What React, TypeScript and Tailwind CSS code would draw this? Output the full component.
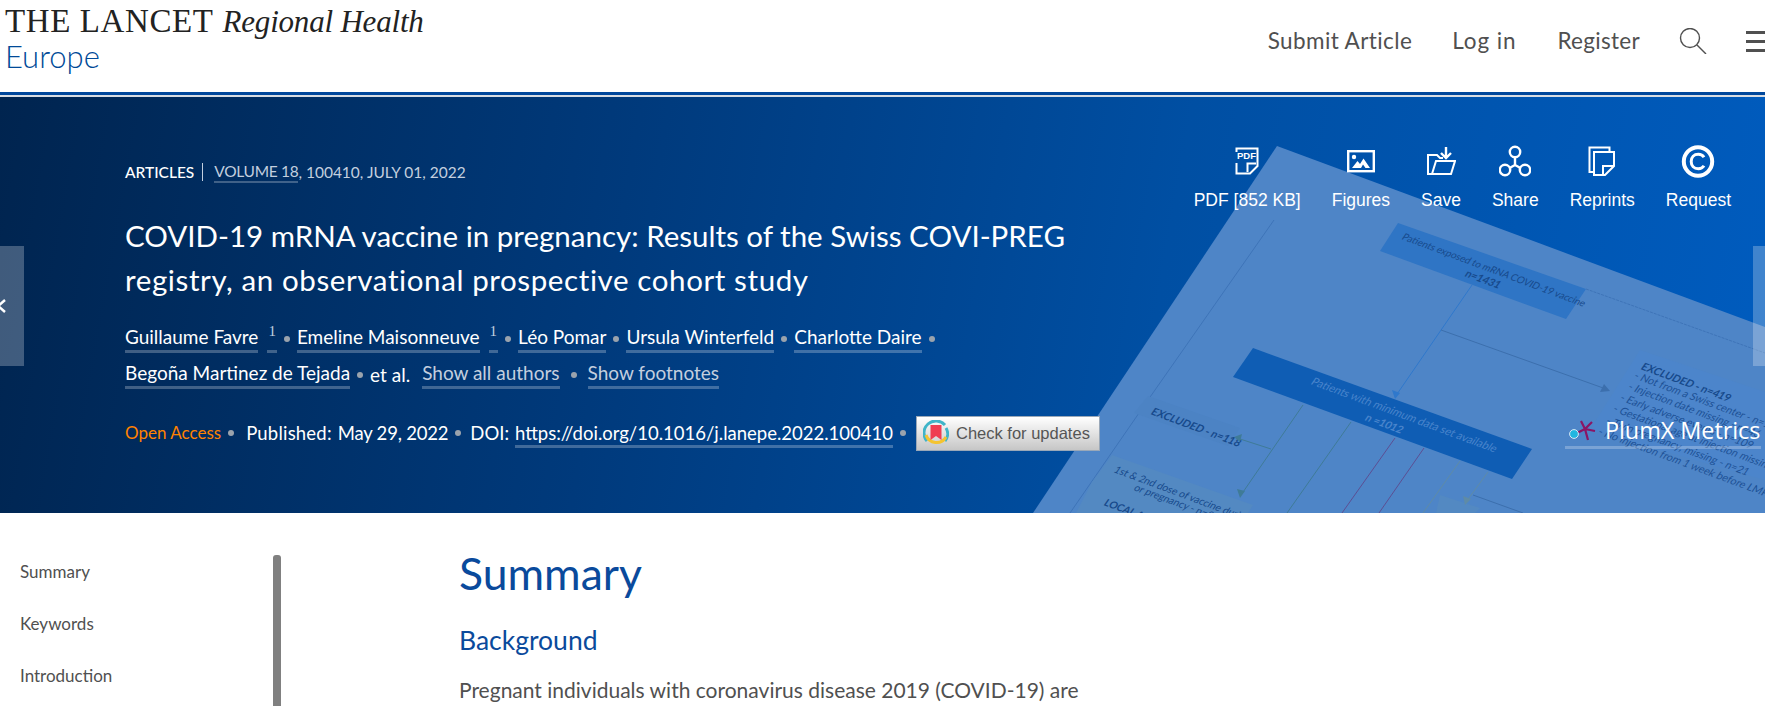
const sans = "font-['Lato','Noto_Sans',sans-serif]";

const topActions = [
  { label: "PDF [852 KB]", icon: <PdfIcon /> },
  { label: "Figures", icon: <FigureIcon /> },
  { label: "Save", icon: <SaveIcon /> },
  { label: "Share", icon: <ShareIcon /> },
  { label: "Reprints", icon: <ReprintIcon /> },
  { label: "Request", icon: <RequestIcon /> },
];

function PdfIcon() {
  return (
    <svg width="24" height="28" viewBox="0 0 24 28" fill="none" stroke="white" strokeWidth="2">
      <path d="M1.5 5V1.5H22.5V19L15 26.5H1.5V16" />
      <path d="M12.5 25V16.5H21" />
      <text x="11.5" y="12" textAnchor="middle" fontSize="9.5" fontWeight="700" fill="white" stroke="none" fontFamily="Liberation Sans">PDF</text>
    </svg>
  );
}

function FigureIcon() {
  return (
    <svg width="28" height="30" viewBox="0 0 28 30" fill="none">
      <rect x="1.2" y="5.2" width="25.6" height="20" stroke="white" strokeWidth="2.4" />
      <circle cx="7" cy="11" r="2.2" fill="white" />
      <path d="M5 22L10.5 15L13 18L16.5 12.5L23 22H18.5L16 18.5L14 22Z" fill="white" />
    </svg>
  );
}

function SaveIcon() {
  return (
    <svg width="30" height="30" viewBox="0 0 30 30" fill="none" stroke="white" strokeWidth="2">
      <path d="M6 28H2V9H11L14 12H17" />
      <path d="M6 28L10 15H29L25 28Z" />
      <path d="M20 1V11M15 7L20 12L25 7" strokeWidth="2.4" />
    </svg>
  );
}

function ShareIcon() {
  return (
    <svg width="32" height="33" viewBox="0 0 32 33" fill="none" stroke="white" strokeWidth="2.4">
      <circle cx="16" cy="7" r="5.2" />
      <circle cx="6" cy="25" r="5.2" />
      <circle cx="26" cy="25" r="5.2" />
      <path d="M16 12V20M16 20L10.5 23M16 20L21.5 23" />
    </svg>
  );
}

function ReprintIcon() {
  return (
    <svg width="28" height="31" viewBox="0 0 28 31" fill="none" stroke="white" strokeWidth="2">
      <path d="M5 26H1.5V1.5H21.5V5" />
      <path d="M6 6H26V20L17 29H6Z" />
      <path d="M15 28V20H25" />
    </svg>
  );
}

function RequestIcon() {
  return (
    <svg width="34" height="33" viewBox="0 0 34 33" fill="none" stroke="white">
      <circle cx="17" cy="16.5" r="14.2" strokeWidth="4" />
      <path d="M23 12.2C21.6 10 19.6 9.2 17.3 9.2C13 9.2 10.2 12.2 10.2 16.5C10.2 20.8 13 23.8 17.3 23.8C19.6 23.8 21.6 23 23 20.8" strokeWidth="3" />
    </svg>
  );
}

function Dot() {
  return <span className="mx-[7px] inline-block h-[6px] w-[6px] rounded-full bg-[#9aa3ad]" />;
}

function LinkText({ children, muted }: { children: React.ReactNode; muted?: boolean }) {
  return (
    <span className={`border-b-[3px] border-[#ffffff40] pb-[1px] ${muted ? "text-[#c3cfdf]" : "text-white"}`}>{children}</span>
  );
}

function Sup() {
  return (
    <span className="relative ml-[9px] border-b-[3px] border-[#ffffff40] px-[1px] pb-[1px] font-['Liberation_Serif',serif] text-[15px] leading-[24px] text-[#c3cfdf]">
      <span className="relative top-[-6px]">1</span>
    </span>
  );
}

// flow chart behind the hero, in page coordinates
function FlowChart() {
  const tilt = (x: number, y: number) => `matrix(0.94 0.35 -0.6 0.87 ${x} ${y})`;
  const excluded = [
    ["- Not from a Swiss center - n=109", 1633, 378],
    ["- Injection date missing - n=46", 1627, 389],
    ["- Early adverse events - n=109", 1619, 400],
    ["- Gestational age at injection missing - n=21", 1612, 411],
    ["- Twin pregnancy, missing - n=21", 1605, 423],
    ["- No injection from 1 week before LMP to the end", 1597, 434],
  ] as const;
  return (
    <svg className="absolute left-0 top-0" width="1765" height="416" viewBox="0 97 1765 416" fontFamily="Lato">
      <polygon points="1277,146 1765,327 1765,513 1033,513" fill="#4e85c7" />
      <path d="M1274 220L1148 400L1070 513" stroke="#3e74b8" strokeWidth="1" fill="none" />
      <path d="M1586 289L1765 353" stroke="#3e74b8" strokeWidth="1" strokeDasharray="3 1" fill="none" />

      <polygon points="1398,223 1586,289 1566,319 1380,251" fill="#2f75c5" />
      <text transform={tilt(1401, 239)} fontSize="9.6" fill="#174a8c">Patients exposed to mRNA COVID-19 vaccine</text>
      <text transform={tilt(1464, 276)} fontSize="10.5" fontWeight="700" fill="#174a8c">n=1431</text>

      <polygon points="1253,348 1532,449 1512,479 1233,377" fill="#0f5db4" />
      <text transform={tilt(1310, 384)} fontSize="11" fill="#4a85cc">Patients with minimum data set available</text>
      <text transform={tilt(1364, 420)} fontSize="10.5" fontWeight="700" fill="#4a85cc">n =1012</text>

      <path d="M1472 285L1395 397" stroke="#2f78cc" strokeWidth="1" />
      <path d="M1395 399L1392 390L1400 393Z" fill="#2f78cc" />
      <path d="M1441 330L1606 389" stroke="#3c6fad" strokeWidth="1" />
      <path d="M1610 391L1600 392L1604 384Z" fill="#3c6fad" />

      <polygon points="1640,350 1765,392 1765,480 1590,430" fill="#4c85cb" />
      <text transform={tilt(1640, 369)} fontSize="10.5" fontWeight="700" fill="#174a8c">EXCLUDED - n=419</text>
      {excluded.map(([line, x, y]) => (
        <text key={line} transform={tilt(x, y)} fontSize="10.5" fill="#1d5196">{line}</text>
      ))}

      <polygon points="1148,396 1240,428 1228,446 1134,413" fill="#4c83c4" />
      <text transform={tilt(1150, 414)} fontSize="10.5" fontWeight="700" fill="#174a8c">EXCLUDED - n=118</text>
      <path d="M1271 449L1237 438" stroke="#3f7b97" strokeWidth="1" />
      <path d="M1234 437L1242 434L1240 442Z" fill="#3f7b97" />

      <polygon points="1112,455 1253,505 1248,513 1076,513 1092,482" fill="#5389c2" />
      <polygon points="1440,495 1480,508 1475,513 1436,513" fill="#5389c2" />

      <path d="M1303 405L1241 495" stroke="#3f7b97" strokeWidth="1" />
      <path d="M1240 498L1237 489L1245 491Z" fill="#3f7b97" />
      <path d="M1351 422L1287 513" stroke="#3f7b97" strokeWidth="1" />
      <path d="M1395 438L1342 513" stroke="#5c4f93" strokeWidth="1" />
      <path d="M1424 448L1379 513" stroke="#5c4f93" strokeWidth="1" />
      <path d="M1460 461L1423 513" stroke="#5f8ba6" strokeWidth="1" />
      <path d="M1488 472L1466 502" stroke="#5f8ba6" strokeWidth="1" />
      <path d="M1465 505L1463 496L1471 499Z" fill="#5f8ba6" />
      <path d="M1473 495L1523 513" stroke="#3c6fad" strokeWidth="1" />

      <text transform={tilt(1113, 472)} fontSize="10" fill="#174a8c">1st &amp; 2nd dose of vaccine during PCP</text>
      <text transform={tilt(1133, 490)} fontSize="10" fill="#174a8c">or pregnancy - n=894</text>
      <text transform={tilt(1103, 505)} fontSize="10" fontWeight="700" fill="#174a8c">LOCAL AND SYSTEMIC</text>
    </svg>
  );
}

function PlumxIcon() {
  return (
    <svg width="30" height="26" viewBox="0 0 30 26" className="mr-[6px] shrink-0">
      <g stroke="#8a1565" strokeWidth="2.2">
        <path d="M16 12L12 4M16 12L23 5M16 12L26 14M16 12L19 23M16 12L8 16" />
      </g>
      <circle cx="5" cy="17" r="4.4" fill="#21b6e0" stroke="#d8e8f4" strokeWidth="1" />
    </svg>
  );
}

export default function App() {
  return (
    <div className={`h-[706px] w-[1765px] overflow-hidden bg-white ${sans}`}>
      <header className="flex h-[92px] items-start justify-between">
        <div className="pl-[5px] pt-[3px]">
          <div className="flex h-[38px] items-center font-['Liberation_Serif',serif] text-[#222]">
            <span className="text-[33px] tracking-[0.6px]">THE LANCET</span>
            <span className="ml-[9px] text-[31px] italic tracking-[-0.2px]">Regional Health</span>
          </div>
          <div className="mt-[-4px] text-[31px] font-light leading-[38px] text-[#004a98]">Europe</div>
        </div>
        <nav className="flex items-center pt-[24px] text-[22.5px] leading-[34px] tracking-[0.4px] text-[#505050]">
          <span>Submit Article</span>
          <span className="ml-[40px] tracking-[0.9px]">Log in</span>
          <span className="ml-[41px] tracking-[0.3px]">Register</span>
          <svg className="ml-[39px]" width="28" height="26" viewBox="0 0 28 26" fill="none" stroke="#505050" strokeWidth="1.4">
            <circle cx="11" cy="10" r="9.5" />
            <path d="M18 17L27 26" />
          </svg>
          <div className="ml-[39px] flex w-[19px] flex-col gap-[6px]">
            <div className="h-[3px] bg-[#505050]" />
            <div className="h-[3px] bg-[#505050]" />
            <div className="h-[3px] bg-[#505050]" />
          </div>
        </nav>
      </header>
      <div className="h-[3px] bg-[#00479b]" />
      <div className="h-[2px] bg-[#d9dde3]" />

      <section className="relative flex h-[416px] justify-between overflow-hidden bg-[linear-gradient(100deg,#00244f_0%,#003a7c_35%,#004fa3_65%,#005cbf_100%)]">
        <FlowChart />
        <div className="relative pl-[125px] pt-[64px]">
          <div className="flex items-center text-[15.5px] leading-[20px] text-[#c3cfdf]">
            <span className="font-medium text-white">ARTICLES</span>
            <span className="ml-[8px] mr-[11px] h-[18px] w-[1px] bg-[#c3cfdf]" />
            <span className="border-b-[2px] border-[#ffffff40] tracking-[-0.3px]">VOLUME 18</span>
            <span>, 100410, JULY 01, 2022</span>
          </div>
          <h1 className="mt-[31px] w-[960px] text-[29.5px] leading-[44px] text-white">
            <span className="block">COVID-19 mRNA vaccine in pregnancy: Results of the Swiss COVI-PREG</span>
            <span className="block tracking-[0.6px]">registry, an observational prospective cohort study</span>
          </h1>
          <div className="mt-[19px] flex h-[36px] items-center text-[19px] leading-[24px]">
            <LinkText>Guillaume Favre</LinkText>
            <Sup />
            <Dot />
            <LinkText>Emeline Maisonneuve</LinkText>
            <Sup />
            <Dot />
            <LinkText>Léo Pomar</LinkText>
            <Dot />
            <LinkText>Ursula Winterfeld</LinkText>
            <Dot />
            <LinkText>Charlotte Daire</LinkText>
            <Dot />
          </div>
          <div className="flex h-[36px] items-center text-[19px] leading-[24px]">
            <LinkText>Begoña Martinez de Tejada</LinkText>
            <Dot />
            <span className="mr-[12px] text-white">et al.</span>
            <LinkText muted>Show all authors</LinkText>
            <span className="ml-[11px] mr-[11px] inline-block h-[6px] w-[6px] rounded-full bg-[#9aa3ad]" />
            <LinkText muted>Show footnotes</LinkText>
          </div>
          <div className="mt-[22px] flex h-[36px] items-center text-[18.5px] leading-[24px] text-white">
            <span className="text-[17px] text-[#ff8200]">Open Access</span>
            <Dot />
            <span className="ml-[5px] tracking-[0.2px]">Published:</span>
            <span className="ml-[6px] tracking-[-0.2px]">May 29, 2022</span>
            <Dot />
            <span className="ml-[2px]">DOI:</span>
            <span className="ml-[6px]">
              <LinkText>https://doi.org/10.1016/j.lanepe.2022.100410</LinkText>
            </span>
            <Dot />
            <div className="ml-[3px] flex h-[35px] w-[184px] items-center gap-[7px] border border-[#9aa8b8] bg-[linear-gradient(#ffffff,#c6c6c6)] pl-[6px] font-['Liberation_Sans',sans-serif] text-[16.5px] text-[#555]">
              <svg width="26" height="26" viewBox="0 0 26 26" fill="none">
                <path d="M4 21A11 11 0 0 1 22 5" stroke="#3fb4c8" strokeWidth="3" />
                <path d="M23 8A11 11 0 0 1 22 21" stroke="#3fb4c8" strokeWidth="3" />
                <path d="M3 15A11 11 0 0 0 23 17" stroke="#f4c430" strokeWidth="3" />
                <path d="M7.5 5H18.5V20L13 16L7.5 20Z" fill="#ef3d52" />
              </svg>
              <span>Check for updates</span>
            </div>
          </div>
        </div>

        <div className="relative flex flex-col items-end pr-[34px]">
          <div className="mt-[46px] flex gap-[31px] font-['Liberation_Sans',sans-serif] text-[17.5px] leading-[20px] text-white">
            {topActions.map((a) => (
              <div key={a.label} className="flex flex-col items-center">
                <div className="flex h-[36px] items-center">{a.icon}</div>
                <span className="mt-[11px]">{a.label}</span>
              </div>
            ))}
          </div>
          <div className="mr-[-30px] mt-[203px] flex h-[36px] w-[196px] items-center whitespace-nowrap border-b-[3px] border-[#ffffff40] pl-[4px] font-['Open_Sans',sans-serif] text-[23.5px] leading-[30px] tracking-[-0.1px] text-white">
            <PlumxIcon />
            <span>PlumX Metrics</span>
          </div>
        </div>

        <div className="absolute left-0 top-[149px] flex h-[120px] w-[24px] items-center bg-[#ffffff40]">
          <svg width="8" height="20" viewBox="0 0 8 20" fill="none" stroke="white" strokeWidth="2.5">
            <path d="M5 4L-2 10L5 16" />
          </svg>
        </div>
        <div className="absolute right-0 top-[149px] h-[120px] w-[12px] bg-[#ffffff40]" />
      </section>

      <div className="flex h-[193px]">
        <aside className="flex w-[459px] shrink-0">
          <ul className="w-[273px] pl-[20px] pt-[47px] text-[17px] leading-[24px] text-[#505050]">
            <li>Summary</li>
            <li className="mt-[28px]">Keywords</li>
            <li className="mt-[28px]">Introduction</li>
          </ul>
          <div className="mt-[42px] h-[200px] w-[8px] rounded-t-[3px] bg-[#808080]" />
        </aside>
        <main className="pt-[28px]">
          <h2 className="text-[44.5px] leading-[64px] text-[#0a4a9c]">Summary</h2>
          <h3 className="mt-[17px] text-[26.5px] leading-[36px] text-[#0a4a9c]">Background</h3>
          <p className="mt-[16px] w-[640px] text-[21px] leading-[32px] text-[#505050]">
            Pregnant individuals with coronavirus disease 2019 (COVID-19) are
          </p>
        </main>
      </div>
    </div>
  );
}
